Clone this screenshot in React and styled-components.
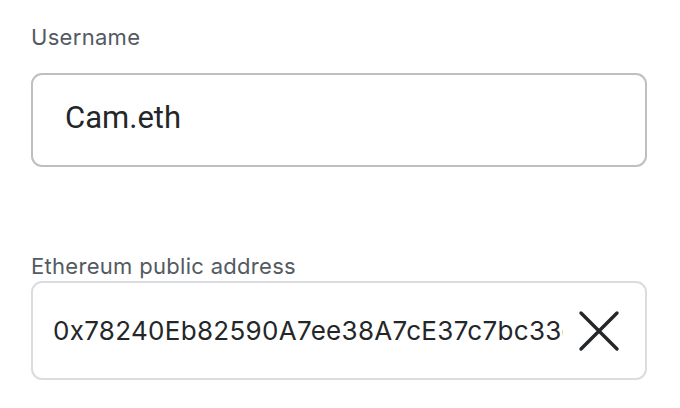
import styled, { createGlobalStyle } from "styled-components";

const GlobalStyle = createGlobalStyle`
  html, body {
    margin: 0;
    padding: 0;
    background: #ffffff;
  }
  * {
    box-sizing: border-box;
  }
`;

const Page = styled.div`
  width: 680px;
  height: 408px;
  padding: 23px 33px 0 31px;
  display: flex;
  flex-direction: column;
  font-family: Inter, "Noto Sans", sans-serif;
`;

const Field = styled.div`
  display: flex;
  flex-direction: column;
  gap: ${(p) => p.gap}px;
  margin-bottom: ${(p) => p.after || 0}px;
`;

const Label = styled.label`
  font-size: 22px;
  line-height: 28px;
  color: #535a61;
  letter-spacing: 0.3px;
`;

const Box = styled.div`
  height: ${(p) => p.h}px;
  border: 2px solid ${(p) => p.border};
  border-radius: 11px;
  display: flex;
  align-items: center;
  padding: ${(p) => p.pad};
  gap: 14px;
`;

const NameText = styled.span`
  font-family: Roboto, "Liberation Sans", sans-serif;
  font-size: 31px;
  color: #24272a;
`;

const AddressText = styled.span`
  flex: 1;
  overflow: hidden;
  white-space: nowrap;
  font-size: 26px;
  color: #24272a;
  letter-spacing: 0.3px;
`;

const ClearButton = styled.button`
  border: 0;
  background: none;
  padding: 0;
  width: 44px;
  height: 44px;
  display: flex;
  align-items: center;
  justify-content: center;
  cursor: pointer;
`;

export default function App() {
  return (
    <>
      <GlobalStyle />
      <Page>
        <Field gap={22} after={85}>
          <Label>Username</Label>
          <Box h={94} border="#bdbfc2" pad="0 0 6px 32px">
            <NameText>Cam.eth</NameText>
          </Box>
        </Field>
        <Field gap={1}>
          <Label>Ethereum public address</Label>
          <Box h={99} border="#dadcdf" pad="0 24px 0 20px">
            <AddressText>0x78240Eb82590A7ee38A7cE37c7bc33ef2fdE16ae</AddressText>
            <ClearButton aria-label="clear">
              <svg width="44" height="44" viewBox="0 0 44 44">
                <path
                  d="M4 4 L40 40 M40 4 L4 40"
                  stroke="#24272a"
                  strokeWidth="3.4"
                  strokeLinecap="round"
                />
              </svg>
            </ClearButton>
          </Box>
        </Field>
      </Page>
    </>
  );
}
